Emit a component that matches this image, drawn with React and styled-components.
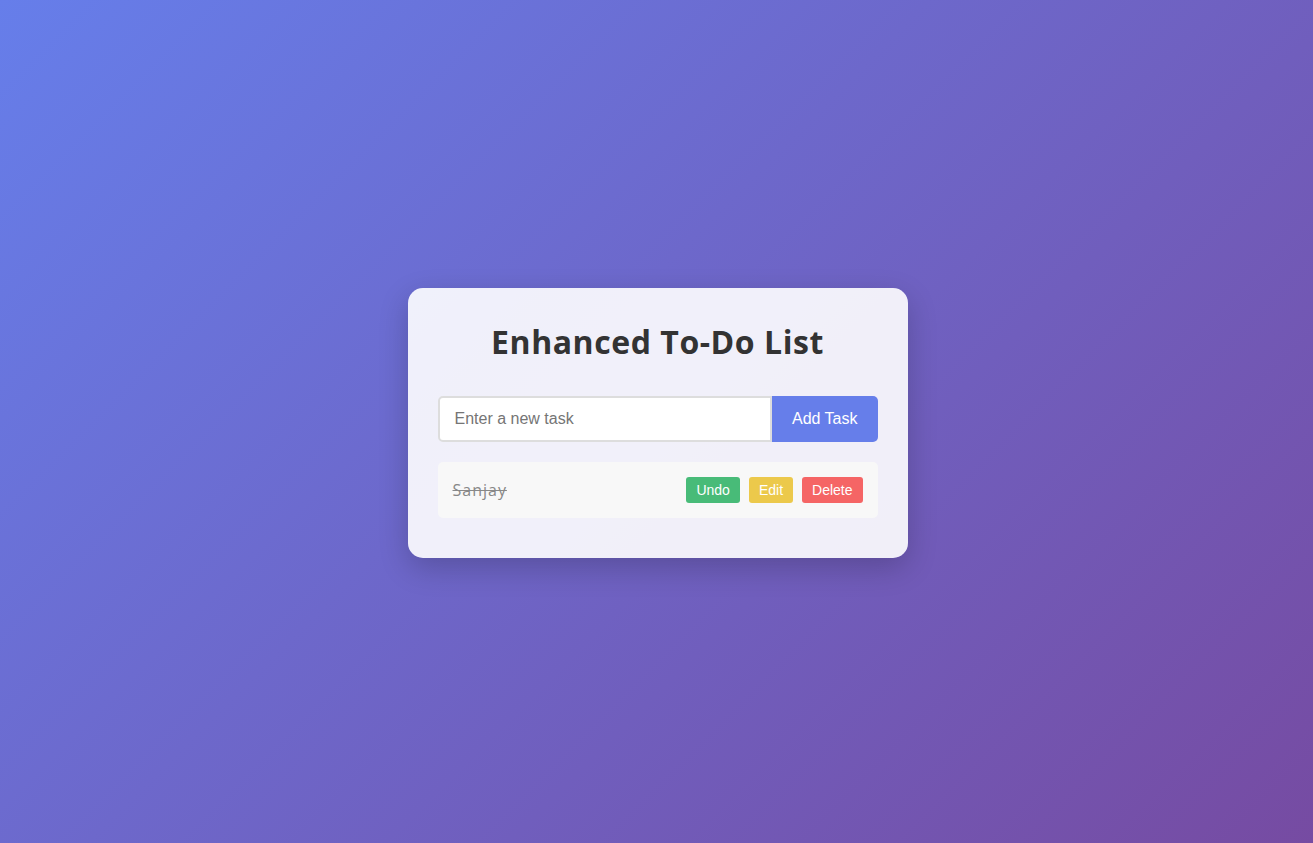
import React from "react";
import styled, { createGlobalStyle } from "styled-components";

const Global = createGlobalStyle`
  * { box-sizing: border-box; }
  html, body { margin: 0; padding: 0; }
  body {
    font-family: "Open Sans", "DejaVu Sans", sans-serif;
    background: linear-gradient(135deg, #667eea 0%, #764ba2 100%);
    min-height: 100vh;
  }
`;

const Page = styled.div`
  min-height: 100vh;
  padding: 2px 0 0 2px;
  display: flex;
  align-items: center;
  justify-content: center;
`;

const Card = styled.div`
  width: 500px;
  padding: 30px;
  background: rgba(255, 255, 255, 0.9);
  border-radius: 15px;
  box-shadow: 0 10px 30px rgba(0, 0, 0, 0.2);
`;

const Title = styled.h1`
  margin: 0 0 30px;
  text-align: center;
  font-size: 32px;
  line-height: 48px;
  font-weight: 700;
  letter-spacing: 0.55px;
  color: #333;
`;

const InputRow = styled.div`
  display: flex;
`;

const TaskInput = styled.input`
  flex: 1;
  min-width: 0;
  padding: 12px 15px;
  font-family: "Liberation Sans", Arial, sans-serif;
  font-size: 16px;
  line-height: 18px;
  border: 2px solid #ddd;
  border-radius: 5px 0 0 5px;
  outline: none;
  background: #fff;
  &::placeholder { color: #757575; }
`;

const AddButton = styled.button`
  padding: 12px 20px;
  font-family: "Liberation Sans", Arial, sans-serif;
  font-size: 16px;
  line-height: 22px;
  color: #fff;
  background: #667eea;
  border: none;
  border-radius: 0 5px 5px 0;
  cursor: pointer;
`;

const List = styled.ul`
  list-style: none;
  margin: 20px 0 0;
  padding: 0;
`;

const Item = styled.li`
  display: flex;
  align-items: center;
  justify-content: space-between;
  padding: 15px;
  margin-bottom: 10px;
  background: #f8f8f8;
  border-radius: 5px;
`;

const TaskText = styled.span`
  font-size: 16px;
  letter-spacing: 1px;
  color: #888;
  text-decoration: ${(p) => (p.$done ? "line-through" : "none")};
`;

const Actions = styled.div`
  display: flex;
  gap: 9px;
`;

const colors = { green: "#48bb78", yellow: "#ecc94b", red: "#f56565" };

const SmallButton = styled.button`
  padding: 5px 10px;
  font-family: "Liberation Sans", Arial, sans-serif;
  font-size: 14px;
  line-height: 16px;
  color: #fff;
  background: ${(p) => colors[p.$tone]};
  border: none;
  border-radius: 3px;
  cursor: pointer;
`;

export default function App() {
  return (
    <>
      <Global />
      <Page>
        <Card>
          <Title>Enhanced To-Do List</Title>
          <InputRow>
            <TaskInput placeholder="Enter a new task" />
            <AddButton>Add Task</AddButton>
          </InputRow>
          <List>
            <Item>
              <TaskText $done>Sanjay</TaskText>
              <Actions>
                <SmallButton $tone="green">Undo</SmallButton>
                <SmallButton $tone="yellow">Edit</SmallButton>
                <SmallButton $tone="red">Delete</SmallButton>
              </Actions>
            </Item>
          </List>
        </Card>
      </Page>
    </>
  );
}
